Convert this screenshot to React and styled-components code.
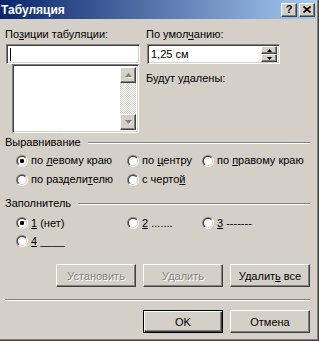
import React from 'react';
import styled, { createGlobalStyle, css } from 'styled-components';

const Global = createGlobalStyle`
  html, body { margin: 0; padding: 0; background: #d4d0c8; }
  body { font-family: "Liberation Sans", Arial, sans-serif; font-size: 11px; color: #000; }
`;

const raised = css`
  background: #d4d0c8;
  border: 1px solid;
  border-color: #fff #404040 #404040 #fff;
  box-shadow: inset -1px -1px #808080;
`;

const sunken = css`
  background: #fff;
  border: 1px solid;
  border-color: #808080 #fff #fff #808080;
  box-shadow: inset 1px 1px #404040, inset -1px -1px #d4d0c8;
`;

const Window = styled.div`
  box-sizing: border-box;
  width: 319px;
  height: 341px;
  background: #d4d0c8;
  display: flex;
  flex-direction: column;
  padding: 0 3px 3px 0;
  box-shadow: inset -1px -1px #404040, inset -2px -2px #808080;
  overflow: hidden;
`;

const TitleBar = styled.div`
  height: 19px;
  flex: none;
  display: flex;
  align-items: center;
  background: linear-gradient(to right, #0a246a, #a6caf0);
  padding: 0 1px 0 1px;
`;

const Title = styled.div`
  flex: 1;
  color: #fff;
  font-weight: bold;
  font-size: 12px;
`;

const CapButtons = styled.div`
  display: flex;
  gap: 2px;
`;

const CapButton = styled.div`
  box-sizing: border-box;
  width: 16px;
  height: 14px;
  ${raised}
  display: flex;
  align-items: center;
  justify-content: center;
  font-weight: bold;
  font-size: 11px;
  line-height: 1;
`;

const Body = styled.div`
  flex: 1;
  display: flex;
  flex-direction: column;
  padding: 9px 6px 0 5px;
`;

const TopGrid = styled.div`
  display: grid;
  grid-template-columns: 135px 1fr;
  column-gap: 6px;
`;

const Column = styled.div`
  display: flex;
  flex-direction: column;
  align-items: flex-start;
`;

const Label = styled.div`
  line-height: 13px;
  height: 13px;
  white-space: nowrap;
  margin-top: ${(p) => p.$mt || 0}px;
`;

const Key = styled.span`
  text-decoration: underline;
  text-underline-offset: 1px;
`;

const Field = styled.div`
  box-sizing: border-box;
  ${sunken}
  margin-top: 3px;
  margin-left: 1px;
  width: ${(p) => p.$w}px;
  height: 20px;
  display: flex;
  align-items: center;
  padding: 0 2px 0 3px;
`;

const Caret = styled.div`
  width: 1px;
  height: 13px;
  background: #000;
`;

const FieldText = styled.div`
  flex: 1;
  line-height: 13px;
`;

const Spin = styled.div`
  display: flex;
  flex-direction: column;
  align-self: stretch;
  justify-content: center;
`;

const SpinButton = styled.div`
  box-sizing: border-box;
  width: 16px;
  height: 8px;
  ${raised}
  display: flex;
  align-items: center;
  justify-content: center;
`;

const ListBox = styled.div`
  box-sizing: border-box;
  ${sunken}
  margin-left: 7px;
  width: 127px;
  height: 69px;
  display: flex;
  justify-content: flex-end;
  padding: 2px;
`;

const ScrollBar = styled.div`
  width: 16px;
  display: flex;
  flex-direction: column;
  background: repeating-conic-gradient(#d4d0c8 0 25%, #ffffff 0 50%) 0 0 / 2px 2px;
`;

const ScrollButton = styled.div`
  box-sizing: border-box;
  width: 16px;
  height: 16px;
  ${raised}
  display: flex;
  align-items: center;
  justify-content: center;
`;

const Track = styled.div`
  flex: 1;
`;

const GroupHeader = styled.div`
  display: flex;
  align-items: center;
  margin-top: ${(p) => p.$mt}px;
  line-height: 13px;
  height: 13px;
`;

const GroupLine = styled.div`
  flex: 1;
  margin-left: 7px;
  height: 0;
  border-top: 1px solid #808080;
  border-bottom: 1px solid #fff;
`;

const RadioGrid = styled.div`
  display: grid;
  grid-template-columns: 111px 75px auto;
  grid-auto-rows: ${(p) => p.$row}px;
  margin-left: 11px;
  margin-top: ${(p) => p.$mt}px;
`;

const RadioItem = styled.div`
  display: flex;
  align-items: center;
  gap: 3px;
  white-space: nowrap;
  line-height: 13px;
`;

const ButtonRow = styled.div`
  display: flex;
  justify-content: flex-end;
  gap: 7px;
  margin-top: ${(p) => p.$mt}px;
`;

const Button = styled.div`
  box-sizing: border-box;
  width: 80px;
  height: 23px;
  ${raised}
  display: flex;
  align-items: center;
  justify-content: center;
  white-space: nowrap;
  color: ${(p) => (p.$disabled ? '#808080' : '#000')};
  text-shadow: ${(p) => (p.$disabled ? '1px 1px #fff' : 'none')};
  ${(p) =>
    p.$default &&
    css`
      border: 1px solid #000;
      box-shadow: inset 1px 1px #fff, inset -1px -1px #404040, inset -2px -2px #808080;
    `}
`;

const Separator = styled.div`
  margin-top: 12px;
  height: 0;
  border-top: 1px solid #808080;
  border-bottom: 1px solid #fff;
`;

const Radio = ({ checked }) => (
  <svg width="12" height="12" viewBox="0 0 12 12">
    <defs>
      <linearGradient id="ro" x1="0" y1="0" x2="1" y2="1">
        <stop offset="0.5" stopColor="#808080" />
        <stop offset="0.5" stopColor="#ffffff" />
      </linearGradient>
      <linearGradient id="ri" x1="0" y1="0" x2="1" y2="1">
        <stop offset="0.5" stopColor="#404040" />
        <stop offset="0.5" stopColor="#d4d0c8" />
      </linearGradient>
    </defs>
    <circle cx="6" cy="6" r="6" fill="url(#ro)" />
    <circle cx="6" cy="6" r="5" fill="url(#ri)" />
    <circle cx="6" cy="6" r="4" fill="#fff" />
    {checked && <rect x="4" y="4" width="4" height="4" rx="1.2" fill="#000" />}
  </svg>
);

const Arrow = ({ up, color = '#000', shadow }) => (
  <svg width="7" height="4" viewBox="0 0 7 4" style={{ overflow: 'visible' }}>
    {shadow && (
      <polygon points={up ? '4.5,1 8,5 1,5' : '1,1 8,1 4.5,5'} fill="#fff" />
    )}
    <polygon points={up ? '3.5,0 7,4 0,4' : '0,0 7,0 3.5,4'} fill={color} />
  </svg>
);

const SmallArrow = ({ up }) => (
  <svg width="5" height="3" viewBox="0 0 5 3">
    <polygon points={up ? '2.5,0 5,3 0,3' : '0,0 5,0 2.5,3'} fill="#000" />
  </svg>
);

const RadioOption = ({ checked, children }) => (
  <RadioItem>
    <Radio checked={checked} />
    <span>{children}</span>
  </RadioItem>
);

export default function App() {
  return (
    <>
      <Global />
      <Window>
        <TitleBar>
          <Title>Табуляция</Title>
          <CapButtons>
            <CapButton>?</CapButton>
            <CapButton>
              <svg width="8" height="7" viewBox="0 0 8 7">
                <path d="M0.5 0.5 L7.5 6.5 M7.5 0.5 L0.5 6.5" stroke="#000" strokeWidth="1.6" />
              </svg>
            </CapButton>
          </CapButtons>
        </TitleBar>
        <Body>
          <TopGrid>
            <Column>
              <Label>
                По<Key>з</Key>иции табуляции:
              </Label>
              <Field $w={134}>
                <Caret />
              </Field>
              <ListBox>
                <ScrollBar>
                  <ScrollButton>
                    <Arrow up color="#808080" shadow />
                  </ScrollButton>
                  <Track />
                  <ScrollButton>
                    <Arrow color="#808080" shadow />
                  </ScrollButton>
                </ScrollBar>
              </ListBox>
            </Column>
            <Column>
              <Label>
                По умол<Key>ч</Key>анию:
              </Label>
              <Field $w={133}>
                <FieldText>1,25 см</FieldText>
                <Spin>
                  <SpinButton>
                    <SmallArrow up />
                  </SpinButton>
                  <SpinButton>
                    <SmallArrow />
                  </SpinButton>
                </Spin>
              </Field>
              <Label $mt={8}>Будут удалены:</Label>
            </Column>
          </TopGrid>

          <GroupHeader $mt={3}>
            Выравнивание
            <GroupLine />
          </GroupHeader>
          <RadioGrid $row={19} $mt={2}>
            <RadioOption checked>
              по <Key>л</Key>евому краю
            </RadioOption>
            <RadioOption>
              по <Key>ц</Key>ентру
            </RadioOption>
            <RadioOption>
              по <Key>п</Key>равому краю
            </RadioOption>
            <RadioOption>
              по раздели<Key>т</Key>елю
            </RadioOption>
            <RadioOption>
              с черто<Key>й</Key>
            </RadioOption>
          </RadioGrid>

          <GroupHeader $mt={8}>
            Заполнитель
            <GroupLine />
          </GroupHeader>
          <RadioGrid $row={18} $mt={4}>
            <RadioOption checked>
              <Key>1</Key> (нет)
            </RadioOption>
            <RadioOption>
              <Key>2</Key> .......
            </RadioOption>
            <RadioOption>
              <Key>3</Key> -------
            </RadioOption>
            <RadioOption>
              <Key>4</Key> ____
            </RadioOption>
          </RadioGrid>

          <ButtonRow $mt={14}>
            <Button $disabled>
              <span>Установить</span>
            </Button>
            <Button $disabled>
              <span>Удалить</span>
            </Button>
            <Button>
              <span>
                Удалит<Key>ь</Key> все
              </span>
            </Button>
          </ButtonRow>
          <Separator />
          <ButtonRow $mt={9}>
            <Button $default>
              <span>OK</span>
            </Button>
            <Button>
              <span>Отмена</span>
            </Button>
          </ButtonRow>
        </Body>
      </Window>
    </>
  );
}
